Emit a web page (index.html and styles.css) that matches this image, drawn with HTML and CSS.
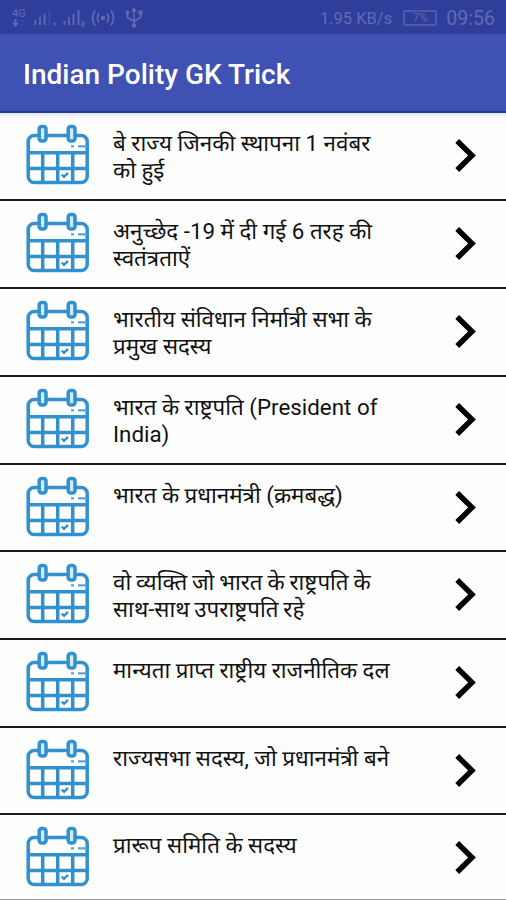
FILE: index.html
```html
<!DOCTYPE html>
<html lang="hi">
<head>
    <meta charset="UTF-8">
    <meta name="viewport" content="width=device-width, initial-scale=1.0">
    <title>Indian Polity GK Trick</title>
    <link rel="stylesheet" href="styles.css">
</head>
<body>
    <!-- Icons shared by all the rows -->
    <svg class="icon-defs" width="0" height="0">
        <symbol id="calendar" viewBox="0 0 66 62">
            <g fill="none" stroke="#3191cf" stroke-width="3.5">
                <rect x="3.2" y="11.6" width="59" height="47" rx="6"/>
                <path d="M3 28.8H62M3 44.4H62M17.7 29V58M32.7 29V58M47.7 29V58"/>
                <rect x="14.2" y="2.6" width="6.8" height="14.4" rx="2.5" fill="#d5ebf9"/>
                <rect x="43.2" y="2.6" width="6.8" height="14.4" rx="2.5" fill="#d5ebf9"/>
                <path d="M46 22.4h3M53 22.4h9" stroke-width="2.4" stroke="#55a5d9"/>
                <path d="M36.8 50.5l2.2 2.3 4-4" stroke-width="2.4"/>
            </g>
        </symbol>
        <symbol id="chevron" viewBox="0 0 24 36">
            <path d="M4.2 3L19 17.5 4.2 32" fill="none" stroke="#000" stroke-width="5.4"/>
        </symbol>
    </svg>

    <div class="status-bar">
        <div class="status-left">
            <div class="network"><span>4G</span>
                <svg width="14" height="8" viewBox="0 0 14 8"><path d="M3.5 0v6M1 3.5L3.5 6.5 6 3.5" fill="none" stroke="currentColor" stroke-width="1.8"/><path d="M10.5 7V1M9 3l1.5-2L12 3" fill="none" stroke="currentColor" opacity=".3"/></svg>
            </div>
            <svg class="signal" width="24" height="18" viewBox="0 0 24 18"><path d="M1.5 11v5M6 8v8M10.5 5v11" stroke="currentColor" stroke-width="1.8"/><path d="M15.5 1v15" stroke="currentColor" stroke-width="1.5" opacity=".4"/><path d="M19 14h2v3" fill="none" stroke="currentColor" stroke-width="1.2"/></svg>
            <svg class="signal second" width="24" height="18" viewBox="0 0 24 18"><path d="M1.5 12v4M6 8v8M10.5 5v11M15.5 1v15" stroke="currentColor" stroke-width="1.8"/><path d="M18 13h3v2h-2v2h3" fill="none" stroke="currentColor" stroke-width="1.1"/></svg>
            <svg class="hotspot" width="24" height="18" viewBox="0 0 24 18"><circle cx="12" cy="9" r="2.3" fill="currentColor"/><path d="M8 4.5q-3 4.5 0 9M16 4.5q3 4.5 0 9M4 1.5q-5 7.5 0 15M20 1.5q5 7.5 0 15" fill="none" stroke="currentColor" stroke-width="1.8"/></svg>
            <svg class="usb" width="18" height="22" viewBox="0 0 18 22"><path d="M9 3v15M2.5 6v4.5L9 14.5l6.5-4V6" fill="none" stroke="currentColor" stroke-width="1.6"/><path d="M9 0l3 4.5H6z" fill="currentColor"/><circle cx="9" cy="18.5" r="2.2" fill="currentColor"/><circle cx="2.5" cy="5.5" r="1.9" fill="currentColor"/><path d="M13.5 3.5h4v4h-4z" fill="currentColor"/></svg>
        </div>
        <div class="status-right">
            <span class="speed">1.95 KB/s</span>
            <span class="battery">7%</span>
            <span class="clock">09:56</span>
        </div>
    </div>

    <div class="app-bar">
        <h1 class="title">Indian Polity GK Trick</h1>
    </div>

    <div class="topics">
        <div class="topic">
            <svg class="calendar"><use href="#calendar"/></svg>
            <p class="topic-name">बे राज्य जिनकी स्थापना 1 नवंबर<br>को हुई</p>
            <svg class="chevron"><use href="#chevron"/></svg>
        </div>
        <div class="topic">
            <svg class="calendar"><use href="#calendar"/></svg>
            <p class="topic-name">अनुच्छेद -19 में दी गई 6 तरह की<br>स्वतंत्रताऐं</p>
            <svg class="chevron"><use href="#chevron"/></svg>
        </div>
        <div class="topic">
            <svg class="calendar"><use href="#calendar"/></svg>
            <p class="topic-name">भारतीय संविधान निर्मात्री सभा के<br>प्रमुख सदस्य</p>
            <svg class="chevron"><use href="#chevron"/></svg>
        </div>
        <div class="topic">
            <svg class="calendar"><use href="#calendar"/></svg>
            <p class="topic-name">भारत के राष्ट्रपति (President of<br>India)</p>
            <svg class="chevron"><use href="#chevron"/></svg>
        </div>
        <div class="topic">
            <svg class="calendar"><use href="#calendar"/></svg>
            <p class="topic-name">भारत के प्रधानमंत्री (क्रमबद्ध)</p>
            <svg class="chevron"><use href="#chevron"/></svg>
        </div>
        <div class="topic">
            <svg class="calendar"><use href="#calendar"/></svg>
            <p class="topic-name tight">वो व्यक्ति जो भारत के राष्ट्रपति के<br>साथ-साथ उपराष्ट्रपति रहे</p>
            <svg class="chevron"><use href="#chevron"/></svg>
        </div>
        <div class="topic">
            <svg class="calendar"><use href="#calendar"/></svg>
            <p class="topic-name">मान्यता प्राप्त राष्ट्रीय राजनीतिक दल</p>
            <svg class="chevron"><use href="#chevron"/></svg>
        </div>
        <div class="topic">
            <svg class="calendar"><use href="#calendar"/></svg>
            <p class="topic-name">राज्यसभा सदस्य, जो प्रधानमंत्री बने</p>
            <svg class="chevron"><use href="#chevron"/></svg>
        </div>
        <div class="topic">
            <svg class="calendar"><use href="#calendar"/></svg>
            <p class="topic-name">प्रारूप समिति के सदस्य</p>
            <svg class="chevron"><use href="#chevron"/></svg>
        </div>
    </div>
</body>
</html>
```

FILE: styles.css
```css
body {
    margin: 0;
    height: 900px;
    overflow: hidden;
    background-color: #fefefe;
    font-family: Roboto, "Noto Sans", "Noto Sans Devanagari", sans-serif;
    color: #111;
}

.icon-defs {
    display: block;
}

/* Phone status bar */
.status-bar {
    display: flex;
    justify-content: space-between;
    height: 34px;
    padding: 0 11px 0 12px;
    background-color: #303e9b;
    color: #5e6bb9;
}

.status-left,
.status-right {
    display: flex;
    align-items: center;
    padding-top: 2px;
}

.network {
    display: flex;
    flex-direction: column;
    width: 16px;
    margin-right: 6px;
    font-size: 11px;
    line-height: 10px;
}

.second {
    margin-left: 5px;
}

.hotspot {
    margin-left: 4px;
}

.usb {
    margin-left: 10px;
}

.speed {
    font-size: 16.5px;
}

.battery {
    box-sizing: border-box;
    width: 34px;
    height: 16px;
    margin: 0 9px 0 11px;
    border: 2px solid #4c59ad;
    border-radius: 2px;
    font-size: 11px;
    line-height: 12px;
    text-align: center;
}

.clock {
    font-size: 19.6px;
}

/* Title bar */
.app-bar {
    display: flex;
    align-items: center;
    box-sizing: border-box;
    height: 79px;
    padding: 4px 0 0 23px;
    border-bottom: 2px solid #1b3ba4;
    background-color: #3f51b2;
}

.title {
    margin: 0;
    font-size: 28px;
    font-weight: 500;
    color: #fff;
}

/* List of topics */
.topics {
    display: grid;
    grid-template-rows: 88px 88px 88px 88px 87px 88px 88px 87px 86px;
    background: linear-gradient(#e4e4e4, #fefefe 5px);
}

.topic {
    display: flex;
    align-items: flex-start;
    box-sizing: border-box;
    padding-left: 25px;
    border-bottom: 2px solid #1c1c1c;
}

.topic:last-child {
    border-bottom-color: #999;
}

.calendar {
    flex: none;
    width: 66px;
    height: 62px;
    margin-top: 11px;
}

.topic-name {
    flex: 1;
    margin: 17px 0 0 22px;
    font-size: 22.35px;
    line-height: 26.5px;
    white-space: nowrap;
}

.tight {
    word-spacing: -0.7px;
}

.chevron {
    flex: none;
    width: 24px;
    height: 36px;
    margin: 25px 29px 0 0;
}
```
